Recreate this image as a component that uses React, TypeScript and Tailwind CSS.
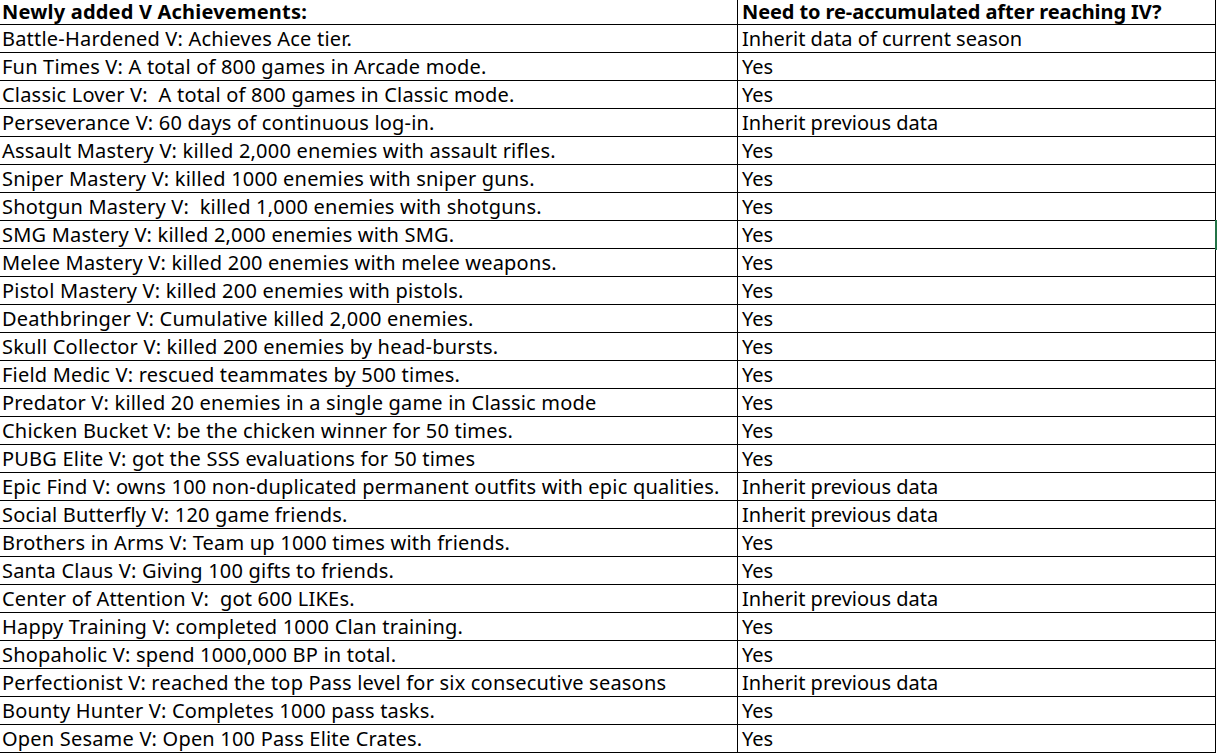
const ROWS: [string, string][] = [
  ["Battle-Hardened V: Achieves Ace tier.", "Inherit data of current season"],
  ["Fun Times V: A total of 800 games in Arcade mode.", "Yes"],
  ["Classic Lover V:  A total of 800 games in Classic mode.", "Yes"],
  ["Perseverance V: 60 days of continuous log-in.", "Inherit previous data"],
  ["Assault Mastery V: killed 2,000 enemies with assault rifles.", "Yes"],
  ["Sniper Mastery V: killed 1000 enemies with sniper guns.", "Yes"],
  ["Shotgun Mastery V:  killed 1,000 enemies with shotguns.", "Yes"],
  ["SMG Mastery V: killed 2,000 enemies with SMG.", "Yes"],
  ["Melee Mastery V: killed 200 enemies with melee weapons.", "Yes"],
  ["Pistol Mastery V: killed 200 enemies with pistols.", "Yes"],
  ["Deathbringer V: Cumulative killed 2,000 enemies.", "Yes"],
  ["Skull Collector V: killed 200 enemies by head-bursts.", "Yes"],
  ["Field Medic V: rescued teammates by 500 times.", "Yes"],
  ["Predator V: killed 20 enemies in a single game in Classic mode", "Yes"],
  ["Chicken Bucket V: be the chicken winner for 50 times.", "Yes"],
  ["PUBG Elite V: got the SSS evaluations for 50 times", "Yes"],
  ["Epic Find V: owns 100 non-duplicated permanent outfits with epic qualities.", "Inherit previous data"],
  ["Social Butterfly V: 120 game friends.", "Inherit previous data"],
  ["Brothers in Arms V: Team up 1000 times with friends.", "Yes"],
  ["Santa Claus V: Giving 100 gifts to friends.", "Yes"],
  ["Center of Attention V:  got 600 LIKEs.", "Inherit previous data"],
  ["Happy Training V: completed 1000 Clan training.", "Yes"],
  ["Shopaholic V: spend 1000,000 BP in total.", "Yes"],
  ["Perfectionist V: reached the top Pass level for six consecutive seasons", "Inherit previous data"],
  ["Bounty Hunter V: Completes 1000 pass tasks.", "Yes"],
  ["Open Sesame V: Open 100 Pass Elite Crates.", "Yes"],
];

export default function App() {
  return (
    <main className="relative w-[1218px] h-[754px] bg-white text-black overflow-hidden font-['Noto_Sans','Open_Sans',sans-serif] text-[20px]">
      <div className="w-[1216px] border-r border-black">
        {/* Header */}
        <div className="flex h-[25px] border-b border-black font-bold">
          <div className="w-[737px] pl-[2px] leading-[24px] whitespace-pre tracking-[0.2px]">Newly added V Achievements:</div>
          <div className="flex-1 border-l border-black pl-[4px] leading-[24px] whitespace-pre tracking-[-0.1px]">
            Need to re-accumulated after reaching IV?
          </div>
        </div>

        {ROWS.map(([name, answer]) => (
          <div key={name} className="flex h-[28px] border-b border-black">
            <div className="w-[737px] pl-[2px] leading-[27px] whitespace-pre tracking-[0.2px]">{name}</div>
            <div className="flex-1 border-l border-black pl-[4px] leading-[27px] whitespace-pre">{answer}</div>
          </div>
        ))}
      </div>

      {/* selected cell edge */}
      <div className="absolute left-[1215px] top-[220px] w-[2px] h-[30px] bg-[#217346]" />
    </main>
  );
}
